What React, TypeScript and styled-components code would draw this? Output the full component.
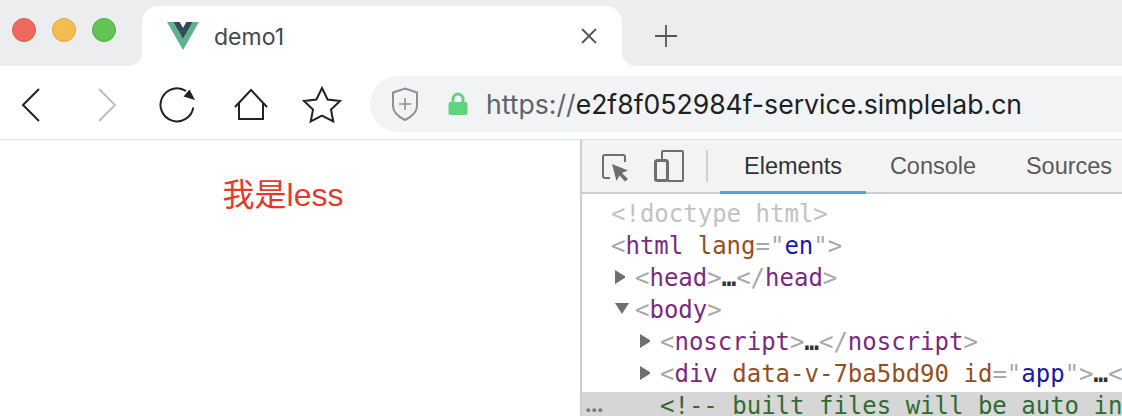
import React from "react";
import styled, { createGlobalStyle } from "styled-components";

const Global = createGlobalStyle`
  html, body { margin: 0; padding: 0; background: #fff; }
  #root { width: 1122px; height: 416px; overflow: hidden; }
`;
const UI = `"Inter", "Liberation Sans", sans-serif`;

const Page = styled.div`
  width: 1122px; height: 416px; display: flex; flex-direction: column; overflow: hidden;
  font-family: ${UI};
`;
const TabStrip = styled.div`display: flex; height: 66px; flex: none; background: #fff;`;
const LeftCap = styled.div`
  width: 142px; flex: none; background: #ecedef; border-bottom-right-radius: 14px;
  display: flex; align-items: center; gap: 16px; padding: 0 0 6px 12px; box-sizing: border-box;
`;
const Light = styled.span<{ $c: string; $b: string }>`
  width: 24px; height: 24px; border-radius: 50%; background: ${p => p.$c};
  box-sizing: border-box; border: 1px solid ${p => p.$b};
`;
const TabWell = styled.div`flex: none; background: #ecedef; padding-top: 6px;`;
const Tab = styled.div`
  width: 480px; height: 60px; background: #fff; border-radius: 16px 16px 0 0; box-sizing: border-box;
  display: flex; align-items: center; padding: 0 25px 0 24px;
`;
const TabTitle = styled.span`
  font-size: 23px; color: #45484d; margin-left: 15px; flex: 1; position: relative; top: 1px;
`;
const RightCap = styled.div`
  flex: 1; background: #ecedef; border-bottom-left-radius: 14px;
  display: flex; align-items: flex-start; padding: 25px 0 0 33px;
`;
const Toolbar = styled.div`
  height: 74px; flex: none; box-sizing: border-box; border-bottom: 1px solid #e0e0e0;
  display: flex; align-items: flex-start; padding: 10px 0 0 370px; position: relative; background: #fff;
`;
const NavIcons = styled.div`position: absolute; left: 0; top: 0;`;
const Omni = styled.div`
  flex: 1; height: 56px; background: #f1f3f4; border-radius: 28px 0 0 28px;
  display: flex; align-items: center; padding-left: 21px;
`;
const Url = styled.div`font-size: 26.6px; color: #202124; margin-left: 18px; white-space: nowrap;`;
const Scheme = styled.span`color: #5f6368;`;
const Body = styled.div`flex: 1; display: flex; min-height: 0;`;
const Viewport = styled.div`
  width: 580px; flex: none; display: flex; justify-content: center; box-sizing: border-box;
  padding: 35px 14px 0 0;
`;
const Hello = styled.div`
  font-family: "Liberation Sans", "Noto Sans CJK SC", sans-serif; font-size: 32px; line-height: 40px; color: #e5392c;
`;
const DevTools = styled.div`
  flex: 1; border-left: 2px solid #cfcfcf; display: flex; flex-direction: column; min-width: 0;
`;
const DevBar = styled.div`
  height: 54px; flex: none; box-sizing: border-box; background: #f3f3f3; border-bottom: 2px solid #cdcdcd;
  display: flex; align-items: stretch; padding-left: 20px; overflow: visible;
  & > svg { flex: none; }
`;
const Separator = styled.span`width: 2px; height: 32px; flex: none; background: #d0d0d0; margin: 10px 12px 0 22px;`;
const DevTab = styled.div<{ $active?: boolean; $w: number }>`
  width: ${p => p.$w}px; height: 54px; box-sizing: border-box; flex: none; text-align: center;
  font-family: "Liberation Sans", sans-serif; font-size: 23.5px; line-height: 52px;
  color: ${p => (p.$active ? "#333" : "#5a5a5a")};
  border-bottom: 3px solid ${p => (p.$active ? "#4aa6e6" : "transparent")};
`;
const Code = styled.div`
  padding-top: 4px; font-family: "DejaVu Sans Mono", monospace; font-size: 24px; color: #a8a8a8;
`;
const Line = styled.div<{ $pad: number }>`
  display: flex; align-items: center; height: 32px; padding-left: ${p => p.$pad}px; white-space: pre;
`;
const HighlightLine = styled(Line)`
  background: #d6d6d6; height: 30px; margin-top: 2px; box-sizing: border-box;
  align-items: flex-start; line-height: 28px;
`;
const Markup = styled.span`display: block;`;
const Twisty = styled.span`width: 20px; flex: none; display: flex; align-items: center; margin-top: -3px;`;
const Gutter = styled.span`
  width: 78px; flex: none; font-family: "Liberation Sans", sans-serif; font-size: 13px; line-height: 36px;
  color: #777; padding-left: 4px; box-sizing: border-box; letter-spacing: 1.5px; font-weight: 700;
`;
const Tag = styled.span`color: #7b2a80;`;
const Attr = styled.span`color: #93501e;`;
const Val = styled.span`color: #1a1aa6;`;
const Dim = styled.span`color: #c2c2c2;`;
const Dots = styled.span`color: #333; font-weight: 700;`;
const Comment = styled.span`color: #2f6b32;`;

const Right = () => (
  <svg width="10" height="14" viewBox="0 0 10 14"><path d="M0 0L11 7L0 14Z" fill="#6e6e6e" /></svg>
);
const Down = () => (
  <svg width="14" height="11" viewBox="0 0 14 11"><path d="M0 0H14L7 11Z" fill="#6e6e6e" /></svg>
);

const Nav = () => (
  <svg width="370" height="73" viewBox="0 66 370 73" fill="none" style={{ display: "block" }}>
    <path d="M39 89L23 105L39 121" stroke="#222" strokeWidth="2" />
    <path d="M99 89L115 105L99 121" stroke="#bdbdbd" strokeWidth="2" />
    <path d="M186 91A16.5 16.5 0 1 0 193.3 107.5" stroke="#222" strokeWidth="2" />
    <path d="M189.5 89.5L195 100L183.5 96.5Z" fill="#222" />
    <path d="M235 107L251 90L267 107M239 103V119H263V103" stroke="#222" strokeWidth="2" />
    <path d="M322 88L327.6 99.5L340 101L331 109.6L333.3 121.5L322 115.7L310.7 121.5L313 109.6L304 101L316.4 99.5Z" stroke="#222" strokeWidth="2" strokeLinejoin="miter" />
  </svg>
);

export default function App() {
  return (
    <Page>
      <Global />
      <TabStrip>
        <LeftCap>
          <Light $c="#ee6a5f" $b="#dd5b50" />
          <Light $c="#f5bd4f" $b="#dfa63e" />
          <Light $c="#61c454" $b="#52ad46" />
        </LeftCap>
        <TabWell>
          <Tab>
            <svg width="32" height="28" viewBox="0 0 32 28" style={{ marginLeft: 1 }}>
              <path d="M0 0H12.5L16 6L19.5 0H32L16 28Z" fill="#5fb38c" />
              <path d="M6.5 0H12.5L16 6L19.5 0H25.5L16 16.5Z" fill="#35495e" />
            </svg>
            <TabTitle>demo1</TabTitle>
            <svg width="16" height="16" viewBox="0 0 16 16">
              <path d="M1 1L15 15M15 1L1 15" stroke="#555" strokeWidth="1.8" />
            </svg>
          </Tab>
        </TabWell>
        <RightCap>
          <svg width="22" height="22" viewBox="0 0 22 22">
            <path d="M0 11H22M11 0V22" stroke="#555" strokeWidth="1.8" />
          </svg>
        </RightCap>
      </TabStrip>
      <Toolbar>
        <NavIcons><Nav /></NavIcons>
        <Omni>
          <svg width="28" height="34" viewBox="0 0 28 34" fill="none">
            <path d="M14 1.5L26 5.5V19C26 26 20 30 14 33C8 30 2 26 2 19V5.5Z" stroke="#8d9094" strokeWidth="2" />
            <path d="M14 11V23M8 17H20" stroke="#8d9094" strokeWidth="1.6" />
          </svg>
          <svg width="20" height="24" viewBox="0 0 20 24" style={{ marginLeft: 29 }} fill="none">
            <path d="M5 11V7A5 5 0 0 1 15 7V11" stroke="#5fd47a" strokeWidth="3" />
            <rect x="0.5" y="10" width="19" height="13" rx="2" fill="#5fd47a" />
          </svg>
          <Url><Scheme>https://</Scheme>e2f8f052984f-service.simplelab.cn</Url>
        </Omni>
      </Toolbar>
      <Body>
        <Viewport><Hello>我是less</Hello></Viewport>
        <DevTools>
          <DevBar>
            <svg width="27" height="30" viewBox="0 0 27 30" fill="none" style={{ marginTop: 14 }}>
              <path d="M8 24H3Q1 24 1 22V3Q1 1 3 1H21Q23 1 23 3V8" stroke="#6e6e6e" strokeWidth="2" />
              <path d="M10 10L26 16.5L20 19L26 25L23 27.5L17.5 21.5L14.5 27Z" fill="#6e6e6e" />
            </svg>
            <svg width="30" height="32" viewBox="0 0 30 32" fill="none" style={{ marginLeft: 25, marginTop: 10 }}>
              <path d="M8 9V2Q8 1 9 1H28Q29 1 29 2V30Q29 31 28 31H14" stroke="#6e6e6e" strokeWidth="2" />
              <rect x="1.5" y="10.5" width="12" height="20" rx="2" stroke="#6e6e6e" strokeWidth="3" />
            </svg>
            <Separator />
            <DevTab $active $w={146}>Elements</DevTab>
            <DevTab $w={134}>Console</DevTab>
            <DevTab $w={138}>Sources</DevTab>
          </DevBar>
          <Code>
            <Line $pad={29}><Dim>&lt;!doctype html&gt;</Dim></Line>
            <Line $pad={29}><Markup>&lt;<Tag>html</Tag> <Attr>lang</Attr>="<Val>en</Val>"&gt;</Markup></Line>
            <Line $pad={33}><Twisty><Right /></Twisty><Markup>&lt;<Tag>head</Tag>&gt;<Dots>…</Dots>&lt;/<Tag>head</Tag>&gt;</Markup></Line>
            <Line $pad={33}><Twisty><Down /></Twisty><Markup>&lt;<Tag>body</Tag>&gt;</Markup></Line>
            <Line $pad={58}><Twisty><Right /></Twisty><Markup>&lt;<Tag>noscript</Tag>&gt;<Dots>…</Dots>&lt;/<Tag>noscript</Tag>&gt;</Markup></Line>
            <Line $pad={58}><Twisty><Right /></Twisty><Markup>&lt;<Tag>div</Tag> <Attr>data-v-7ba5bd90</Attr> <Attr>id</Attr>="<Val>app</Val>"&gt;<Dots>…</Dots>&lt;</Markup></Line>
            <HighlightLine $pad={0}><Gutter>•••</Gutter><Comment>&lt;!-- built files will be auto in</Comment></HighlightLine>
          </Code>
        </DevTools>
      </Body>
    </Page>
  );
}
